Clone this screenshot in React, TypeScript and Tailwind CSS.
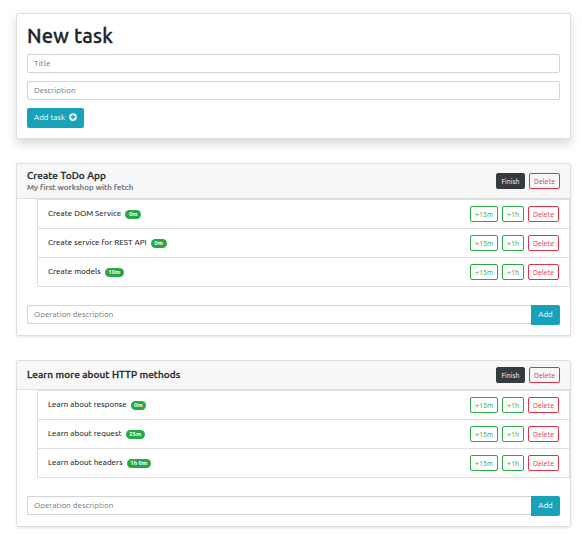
type Operation = { name: string; time: string; badge: string };
type Task = {
  title: string;
  description?: string;
  header: string;
  operations: Operation[];
};

const tasks: Task[] = [
  {
    title: "Create ToDo App",
    description: "My first workshop with fetch",
    header: "h-[35px]",
    operations: [
      { name: "Create DOM Service", time: "0m", badge: "w-4" },
      { name: "Create service for REST API", time: "0m", badge: "w-4" },
      { name: "Create models", time: "10m", badge: "w-[19px]" },
    ],
  },
  {
    title: "Learn more about HTTP methods",
    header: "h-[29px]",
    operations: [
      { name: "Learn about response", time: "0m", badge: "w-[15px]" },
      { name: "Learn about request", time: "25m", badge: "w-[19px]" },
      { name: "Learn about headers", time: "1h 0m", badge: "w-6" },
    ],
  },
];

const input =
  "block h-[19px] min-w-0 border border-[#ced4da] bg-white px-1.5 text-[8px] tracking-[0.02px] text-[#495057] outline-none placeholder:text-[#6c757d]";
const small =
  "flex h-4 items-center justify-center rounded-[2px] border text-[7px] leading-none whitespace-nowrap";

function TaskCard({ task }: { task: Task }) {
  return (
    <section className="rounded-[2px] border border-[#dfdfdf] bg-white shadow-[0_1px_3px_rgba(0,0,0,0.1)]">
      <header
        className={`flex items-center justify-between border-b border-[#dfdfdf] bg-[#f7f7f7] px-2.5 ${task.header}`}
      >
        <div>
          <h5 className="text-[10px] leading-3 font-medium tracking-[0.06px] whitespace-nowrap [-webkit-text-stroke:0.27px]">
            {task.title}
          </h5>
          {task.description && (
            <h6 className="text-[8px] leading-[11px] font-medium tracking-[0.03px] whitespace-nowrap text-[#6c757d] [-webkit-text-stroke:0.2px]">
              {task.description}
            </h6>
          )}
        </div>
        <div className="flex gap-1">
          <button className={`${small} w-[29px] border-[#343a40] bg-[#343a40] text-white`}>Finish</button>
          <button className={`${small} w-[31px] border-[#dc3545] text-[#dc3545]`}>Delete</button>
        </div>
      </header>
      <ul className="ml-5 border border-b-0 border-[#dfdfdf]">
        {task.operations.map((op) => (
          <li key={op.name} className="flex h-[29px] items-start justify-between border-b border-[#dfdfdf] px-2.5">
            <div className="flex items-start gap-1 pt-2">
              <span className="text-[8px] leading-3 tracking-[0.05px] whitespace-nowrap [-webkit-text-stroke:0.1px]">
                {op.name}
              </span>
              <span
                className={`mt-0.5 flex h-[9px] items-center justify-center rounded-full bg-[#28a745] pb-px text-[6px] leading-none font-bold whitespace-nowrap text-white ${op.badge}`}
              >
                {op.time}
              </span>
            </div>
            <div className="flex gap-1 pt-1.5">
              <button className={`${small} w-7 border-[#28a745] text-[#28a745]`}>+15m</button>
              <button className={`${small} w-[22px] border-[#28a745] text-[#28a745]`}>+1h</button>
              <button className={`${small} w-[31px] border-[#dc3545] text-[#dc3545]`}>Delete</button>
            </div>
          </li>
        ))}
      </ul>
      <form className="flex px-2.5 pt-[18px] pb-2.5">
        <input className={`${input} flex-1 rounded-l-[2px] border-r-0`} placeholder="Operation description" />
        <button type="button" className="h-5 w-[29px] rounded-r-[2px] bg-[#17a2b8] text-[8px] text-white">
          Add
        </button>
      </form>
    </section>
  );
}

export default function App() {
  return (
    <main className="flex h-[534px] w-[582px] flex-col gap-6 overflow-hidden bg-white pt-[13px] pr-[11px] pl-4 font-['Ubuntu','Noto_Sans',sans-serif] text-[#212529]">
      <section className="h-[126px] rounded-[2px] border border-[#dfdfdf] bg-white px-2.5 pt-2.5 shadow-[0_5px_10px_rgba(0,0,0,0.15)]">
        <h1 className="mb-1 h-[26px] text-[20px] leading-6 font-medium tracking-[0.22px] whitespace-nowrap [-webkit-text-stroke:0.35px]">
          New task
        </h1>
        <form className="flex flex-col items-start gap-2">
          <input className={`${input} w-full rounded-[2px]`} placeholder="Title" />
          <input className={`${input} w-full rounded-[2px]`} placeholder="Description" />
          <button
            type="button"
            className="flex h-5 w-[57px] items-start gap-1 rounded-[2px] bg-[#17a2b8] pt-[5px] pl-[7px] text-[8px] leading-[9px] whitespace-nowrap text-white"
          >
            Add task
            <svg viewBox="0 0 512 512" className="h-2 w-2" fill="currentColor">
              <path
                fillRule="evenodd"
                d="M256 8a248 248 0 1 1 0 496a248 248 0 0 1 0-496Zm-44 92v112H100v88h112v112h88V300h112v-88H300V100Z"
              />
            </svg>
          </button>
        </form>
      </section>
      {tasks.map((task) => (
        <TaskCard key={task.title} task={task} />
      ))}
    </main>
  );
}
